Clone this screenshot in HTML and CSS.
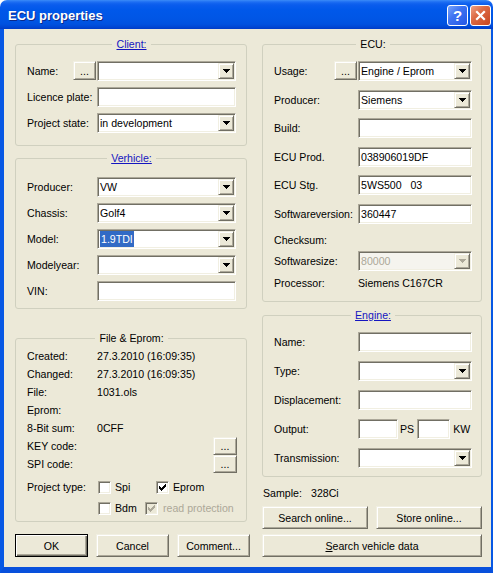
FILE: index.html
```html
<!DOCTYPE html>
<html lang="en">
<head>
<meta charset="utf-8">
<title>ECU properties</title>
<link rel="stylesheet" href="styles.css">
</head>
<body>
<div class="window">
  <header class="titlebar">
    <span class="title">ECU properties</span>
    <div class="caption-buttons">
      <span class="cap cap-help">?</span>
      <span class="cap cap-close"><svg width="13" height="13" viewBox="0 0 13 13"><path d="M3 3 L10 10 M10 3 L3 10" stroke="#fff" stroke-width="2.2" stroke-linecap="square"/></svg></span>
    </div>
  </header>
  <main class="client">
    <div class="col col-left">
      <fieldset class="group g-client">
        <legend class="link">Client:</legend>
        <div class="rows">
          <div class="row">
            <span class="lbl has-btn">Name:<span class="raised btn-dots">...</span></span>
            <div class="combo"><span class="val"></span><span class="raised drop"><svg width="7" height="4" viewBox="0 0 7 4"><path d="M0 0h7v1H0z M1 1h5v1H1z M2 2h3v1H2z M3 3h1v1H3z"/></svg></span></div>
          </div>
          <div class="row"><span class="lbl">Licence plate:</span><div class="edit"></div></div>
          <div class="row">
            <span class="lbl">Project state:</span>
            <div class="combo"><span class="val">in development</span><span class="raised drop"><svg width="7" height="4" viewBox="0 0 7 4"><path d="M0 0h7v1H0z M1 1h5v1H1z M2 2h3v1H2z M3 3h1v1H3z"/></svg></span></div>
          </div>
        </div>
      </fieldset>

      <fieldset class="group g-vehicle">
        <legend class="link">Verhicle:</legend>
        <div class="rows">
          <div class="row"><span class="lbl">Producer:</span><div class="combo"><span class="val">VW</span><span class="raised drop"><svg width="7" height="4" viewBox="0 0 7 4"><path d="M0 0h7v1H0z M1 1h5v1H1z M2 2h3v1H2z M3 3h1v1H3z"/></svg></span></div></div>
          <div class="row"><span class="lbl">Chassis:</span><div class="combo"><span class="val">Golf4</span><span class="raised drop"><svg width="7" height="4" viewBox="0 0 7 4"><path d="M0 0h7v1H0z M1 1h5v1H1z M2 2h3v1H2z M3 3h1v1H3z"/></svg></span></div></div>
          <div class="row"><span class="lbl">Model:</span><div class="combo"><span class="val"><span class="sel">1.9TDI</span></span><span class="raised drop"><svg width="7" height="4" viewBox="0 0 7 4"><path d="M0 0h7v1H0z M1 1h5v1H1z M2 2h3v1H2z M3 3h1v1H3z"/></svg></span></div></div>
          <div class="row"><span class="lbl">Modelyear:</span><div class="combo"><span class="val"></span><span class="raised drop"><svg width="7" height="4" viewBox="0 0 7 4"><path d="M0 0h7v1H0z M1 1h5v1H1z M2 2h3v1H2z M3 3h1v1H3z"/></svg></span></div></div>
          <div class="row"><span class="lbl">VIN:</span><div class="edit"></div></div>
        </div>
      </fieldset>

      <fieldset class="group g-file">
        <legend>File &amp; Eprom:</legend>
        <div class="info">
          <div class="info-row"><span class="k">Created:</span><span class="v">27.3.2010 (16:09:35)</span></div>
          <div class="info-row"><span class="k">Changed:</span><span class="v">27.3.2010 (16:09:35)</span></div>
          <div class="info-row"><span class="k">File:</span><span class="v">1031.ols</span></div>
          <div class="info-row"><span class="k">Eprom:</span><span class="v"></span></div>
          <div class="info-row"><span class="k">8-Bit sum:</span><span class="v">0CFF</span></div>
          <div class="info-row"><span class="k">KEY code:</span><span class="v"></span><span class="raised btn-small">...</span></div>
          <div class="info-row"><span class="k">SPI code:</span><span class="v"></span><span class="raised btn-small">...</span></div>
        </div>
        <div class="check-row first">
          <span class="k">Project type:</span>
          <span class="cb cb-spi"><span class="box"></span>Spi</span>
          <span class="cb"><span class="box"><svg width="7" height="7" viewBox="0 0 7 7"><path d="M6 0h1v3h-1z M5 1h1v3h-1z M4 2h1v3h-1z M3 3h1v3h-1z M2 4h1v3h-1z M1 3h1v3h-1z M0 2h1v3h-1z"/></svg></span>Eprom</span>
        </div>
        <div class="check-row second">
          <span class="k"></span>
          <span class="cb cb-bdm"><span class="box"></span>Bdm</span>
          <span class="cb disabled"><span class="box"><svg width="7" height="7" viewBox="0 0 7 7"><path d="M6 0h1v3h-1z M5 1h1v3h-1z M4 2h1v3h-1z M3 3h1v3h-1z M2 4h1v3h-1z M1 3h1v3h-1z M0 2h1v3h-1z"/></svg></span>read protection</span>
        </div>
      </fieldset>

      <div class="btn-row three">
        <span class="raised btn default">OK</span>
        <span class="raised btn">Cancel</span>
        <span class="raised btn">Comment...</span>
      </div>
    </div>

    <div class="col col-right">
      <fieldset class="group g-ecu">
        <legend>ECU:</legend>
        <div class="rows rows-ecu">
          <div class="row">
            <span class="lbl has-btn">Usage:<span class="raised btn-dots">...</span></span>
            <div class="combo"><span class="val">Engine / Eprom</span><span class="raised drop"><svg width="7" height="4" viewBox="0 0 7 4"><path d="M0 0h7v1H0z M1 1h5v1H1z M2 2h3v1H2z M3 3h1v1H3z"/></svg></span></div>
          </div>
          <div class="row"><span class="lbl">Producer:</span><div class="combo"><span class="val">Siemens</span><span class="raised drop"><svg width="7" height="4" viewBox="0 0 7 4"><path d="M0 0h7v1H0z M1 1h5v1H1z M2 2h3v1H2z M3 3h1v1H3z"/></svg></span></div></div>
          <div class="row"><span class="lbl">Build:</span><div class="edit"></div></div>
          <div class="row"><span class="lbl">ECU Prod.</span><div class="edit"><span class="val">038906019DF</span></div></div>
          <div class="row"><span class="lbl">ECU Stg.</span><div class="edit"><span class="val pre">5WS500   03</span></div></div>
          <div class="row"><span class="lbl">Softwareversion:</span><div class="edit"><span class="val">360447</span></div></div>
          <div class="row text-row checksum"><span class="lbl">Checksum:</span><span></span></div>
          <div class="row tight"><span class="lbl">Softwaresize:</span><div class="combo disabled"><span class="val">80000</span><span class="raised drop"><svg width="7" height="4" viewBox="0 0 7 4"><path d="M0 0h7v1H0z M1 1h5v1H1z M2 2h3v1H2z M3 3h1v1H3z"/></svg></span></div></div>
          <div class="row text-row processor"><span class="lbl">Processor:</span><span class="plain">Siemens C167CR</span></div>
        </div>
      </fieldset>

      <fieldset class="group g-engine">
        <legend class="link">Engine:</legend>
        <div class="rows rows-engine">
          <div class="row"><span class="lbl">Name:</span><div class="edit"></div></div>
          <div class="row"><span class="lbl">Type:</span><div class="combo"><span class="val"></span><span class="raised drop"><svg width="7" height="4" viewBox="0 0 7 4"><path d="M0 0h7v1H0z M1 1h5v1H1z M2 2h3v1H2z M3 3h1v1H3z"/></svg></span></div></div>
          <div class="row"><span class="lbl">Displacement:</span><div class="edit"></div></div>
          <div class="row">
            <span class="lbl">Output:</span>
            <div class="output"><div class="edit out-ps"></div><span class="unit-ps">PS</span><div class="edit out-kw"></div><span class="unit-kw">KW</span></div>
          </div>
          <div class="row"><span class="lbl">Transmission:</span><div class="combo"><span class="val"></span><span class="raised drop"><svg width="7" height="4" viewBox="0 0 7 4"><path d="M0 0h7v1H0z M1 1h5v1H1z M2 2h3v1H2z M3 3h1v1H3z"/></svg></span></div></div>
        </div>
      </fieldset>

      <div class="sample"><span class="sample-k">Sample:</span><span>328Ci</span></div>
      <div class="btn-row two">
        <span class="raised btn">Search online...</span>
        <span class="raised btn">Store online...</span>
      </div>
      <div class="btn-row one">
        <span class="raised btn"><span class="u">S</span>earch vehicle data</span>
      </div>
    </div>
  </main>
</div>
</body>
</html>
```

FILE: styles.css
```css
* { box-sizing: border-box; }
html, body { margin: 0; padding: 0; }
body {
  width: 493px;
  height: 573px;
  overflow: hidden;
  background: #ffffff;
  font-family: "Liberation Sans", Arial, sans-serif;
  font-size: 10.6px;
  color: #000;
}
.window {
  width: 493px;
  height: 573px;
  display: flex;
  flex-direction: column;
}

/* ---------- title bar ---------- */
.titlebar {
  height: 29px;
  flex: none;
  display: flex;
  align-items: flex-start;
  padding: 0 2px 0 8px;
  border-radius: 7px 7px 0 0;
  background: linear-gradient(to bottom,
    #3d8ef8 0px, #2a7af5 1px, #1465f0 3px, #0a5ced 5px,
    #0058ea 10px, #0056e6 18px, #0052e0 24px, #0047d4 27px, #003cc6 29px);
}
.title {
  flex: 1;
  color: #fff;
  font-weight: bold;
  font-size: 13px;
  line-height: 16px;
  margin-top: 8px;
  text-shadow: 1px 1px #0b2a8a;
}
.caption-buttons {
  display: flex;
  gap: 2px;
  margin-top: 5px;
}
.cap {
  width: 21px;
  height: 21px;
  border: 1px solid #fff;
  border-radius: 3px;
  display: flex;
  align-items: center;
  justify-content: center;
}
.cap-help {
  background: linear-gradient(135deg, #79a5fb 0%, #3f74f2 40%, #2457e6 100%);
  color: #fff;
  font-weight: bold;
  font-size: 15px;
  line-height: 19px;
}
.cap-close {
  background: linear-gradient(135deg, #f0a184 0%, #dc6a44 40%, #c8461f 100%);
}

/* ---------- client area ---------- */
.client {
  flex: 1;
  background: #ECE9D8;
  border-left: 4px solid #0758e4;
  border-right: 2px solid #0758e4;
  border-bottom: 6px solid #0850dc;
  display: grid;
  grid-template-columns: 235px 220px;
  column-gap: 12px;
  align-items: start;
  padding: 9px 0 0 11px;
}
.col { display: flex; flex-direction: column; }

/* ---------- group boxes ---------- */
.group {
  margin: 0;
  min-width: 0;
  border: 1px solid #D0D0BF;
  border-radius: 3px;
  padding: 0 10px 0 11px;
}
.group legend {
  margin: 0 auto;
  padding: 0 4px;
  height: 13px;
  line-height: 13px;
}
.group legend.link {
  color: #1515c0;
  text-decoration: underline;
}
.col-left .group { width: 232px; }
.g-client { padding-top: 10px; padding-bottom: 12px; }
.g-vehicle { margin-top: 6px; padding-top: 12px; padding-bottom: 7px; }
.g-file { margin-top: 23px; padding-top: 2px; padding-bottom: 4px; }
.g-ecu { padding-top: 10px; padding-bottom: 11px; padding-right: 9px; }
.g-engine { margin-top: 7px; padding-top: 10px; padding-bottom: 8px; padding-right: 9px; }

.rows { display: flex; flex-direction: column; gap: 6px; }
.row {
  display: grid;
  grid-template-columns: 70px 1fr;
  align-items: center;
  height: 20px;
}
.col-right .row { grid-template-columns: 84px 1fr; }
.lbl { white-space: nowrap; }
.has-btn {
  display: flex;
  justify-content: space-between;
  align-items: center;
}
.rows-ecu { gap: 0; }
.rows-ecu .row + .row { margin-top: 8.5px; }
.rows-ecu .row.checksum { margin-top: 9.5px; height: 14px; }
.rows-ecu .row.tight { margin-top: 4px; }
.rows-ecu .row.processor { margin-top: 5px; height: 14px; }
.rows-engine { gap: 9px; }

/* ---------- classic 3D controls ---------- */
.raised {
  background: #ECE9D8;
  border: 1px solid;
  border-color: #F1EFE2 #716F64 #716F64 #F1EFE2;
  box-shadow: inset 1px 1px #fff, inset -1px -1px #ACA899;
}
.edit, .combo {
  height: 20px;
  background: #fff;
  border: 1px solid;
  border-color: #ACA899 #fff #fff #ACA899;
  box-shadow: inset 1px 1px #716F64, inset -1px -1px #F1EFE2;
  padding: 1px;
  display: flex;
  align-items: center;
}
.val {
  flex: 1;
  min-width: 0;
  padding-left: 1px;
  line-height: 16px;
  white-space: nowrap;
  overflow: hidden;
}
.val.pre { white-space: pre; }
.sel {
  display: inline-block;
  background: #316AC5;
  color: #fff;
  padding: 0 1px;
  line-height: 16px;
}
.drop {
  flex: none;
  width: 16px;
  height: 16px;
  display: flex;
  align-items: center;
  justify-content: center;
}
.drop svg { fill: #000; display: block; }
.combo.disabled { background: #F5F4EE; }
.combo.disabled .val { color: #ACA899; }
.combo.disabled .drop svg { fill: #ACA899; }

.btn-dots {
  width: 23px;
  height: 19px;
  margin-right: 1px;
  margin-top: -1px;
  display: flex;
  align-items: center;
  justify-content: center;
  line-height: 12px;
}
.btn-small {
  width: 24px;
  height: 18px;
  flex: none;
  display: flex;
  align-items: center;
  justify-content: center;
  margin-right: -1px;
}

/* ---------- file & eprom ---------- */
.info { display: flex; flex-direction: column; }
.info-row {
  display: flex;
  align-items: center;
  height: 18px;
}
.k { width: 70px; flex: none; white-space: nowrap; }
.v { flex: 1; white-space: nowrap; }
.check-row {
  display: flex;
  align-items: center;
  height: 18px;
}
.check-row.first { margin-top: 5px; }
.check-row.second { margin-top: 3px; }
.cb {
  display: inline-flex;
  align-items: center;
  gap: 4px;
  white-space: nowrap;
}
.cb-spi { width: 58px; }
.cb-bdm { width: 47px; }
.box {
  width: 13px;
  height: 13px;
  margin-left: 1px;
  background: #fff;
  border: 1px solid;
  border-color: #ACA899 #fff #fff #ACA899;
  box-shadow: inset 1px 1px #716F64, inset -1px -1px #F1EFE2;
  display: flex;
  align-items: center;
  justify-content: center;
}
.box svg { fill: #000; display: block; }
.cb.disabled { color: #ACA899; gap: 5px; }
.cb.disabled .box { background: #ECE9D8; }
.cb.disabled .box svg { fill: #ACA899; }

/* ---------- buttons ---------- */
.btn-row { display: grid; }
.btn-row.three {
  margin-top: 12px;
  grid-template-columns: 73px 73px 73px;
  column-gap: 8px;
}
.btn-row.two {
  margin-top: 6px;
  grid-template-columns: 1fr 1fr;
  column-gap: 8px;
}
.btn-row.one { margin-top: 5px; }
.btn {
  height: 23px;
  display: flex;
  align-items: center;
  justify-content: center;
  white-space: nowrap;
}
.btn.default {
  border: 1px solid #000;
  box-shadow: inset 1px 1px #fff, inset -1px -1px #716F64, inset -2px -2px #ACA899;
}
.u { text-decoration: underline; }

/* ---------- engine / sample ---------- */
.output { display: flex; align-items: center; }
.out-ps { width: 40px; }
.out-kw { width: 33px; }
.unit-ps { margin-left: 2px; margin-right: 3px; }
.unit-kw { margin-left: 3px; }
.plain { white-space: nowrap; }
.sample {
  margin-top: 9px;
  height: 14px;
  line-height: 14px;
  padding-left: 1px;
  display: flex;
}
.sample-k { width: 48px; }
```
